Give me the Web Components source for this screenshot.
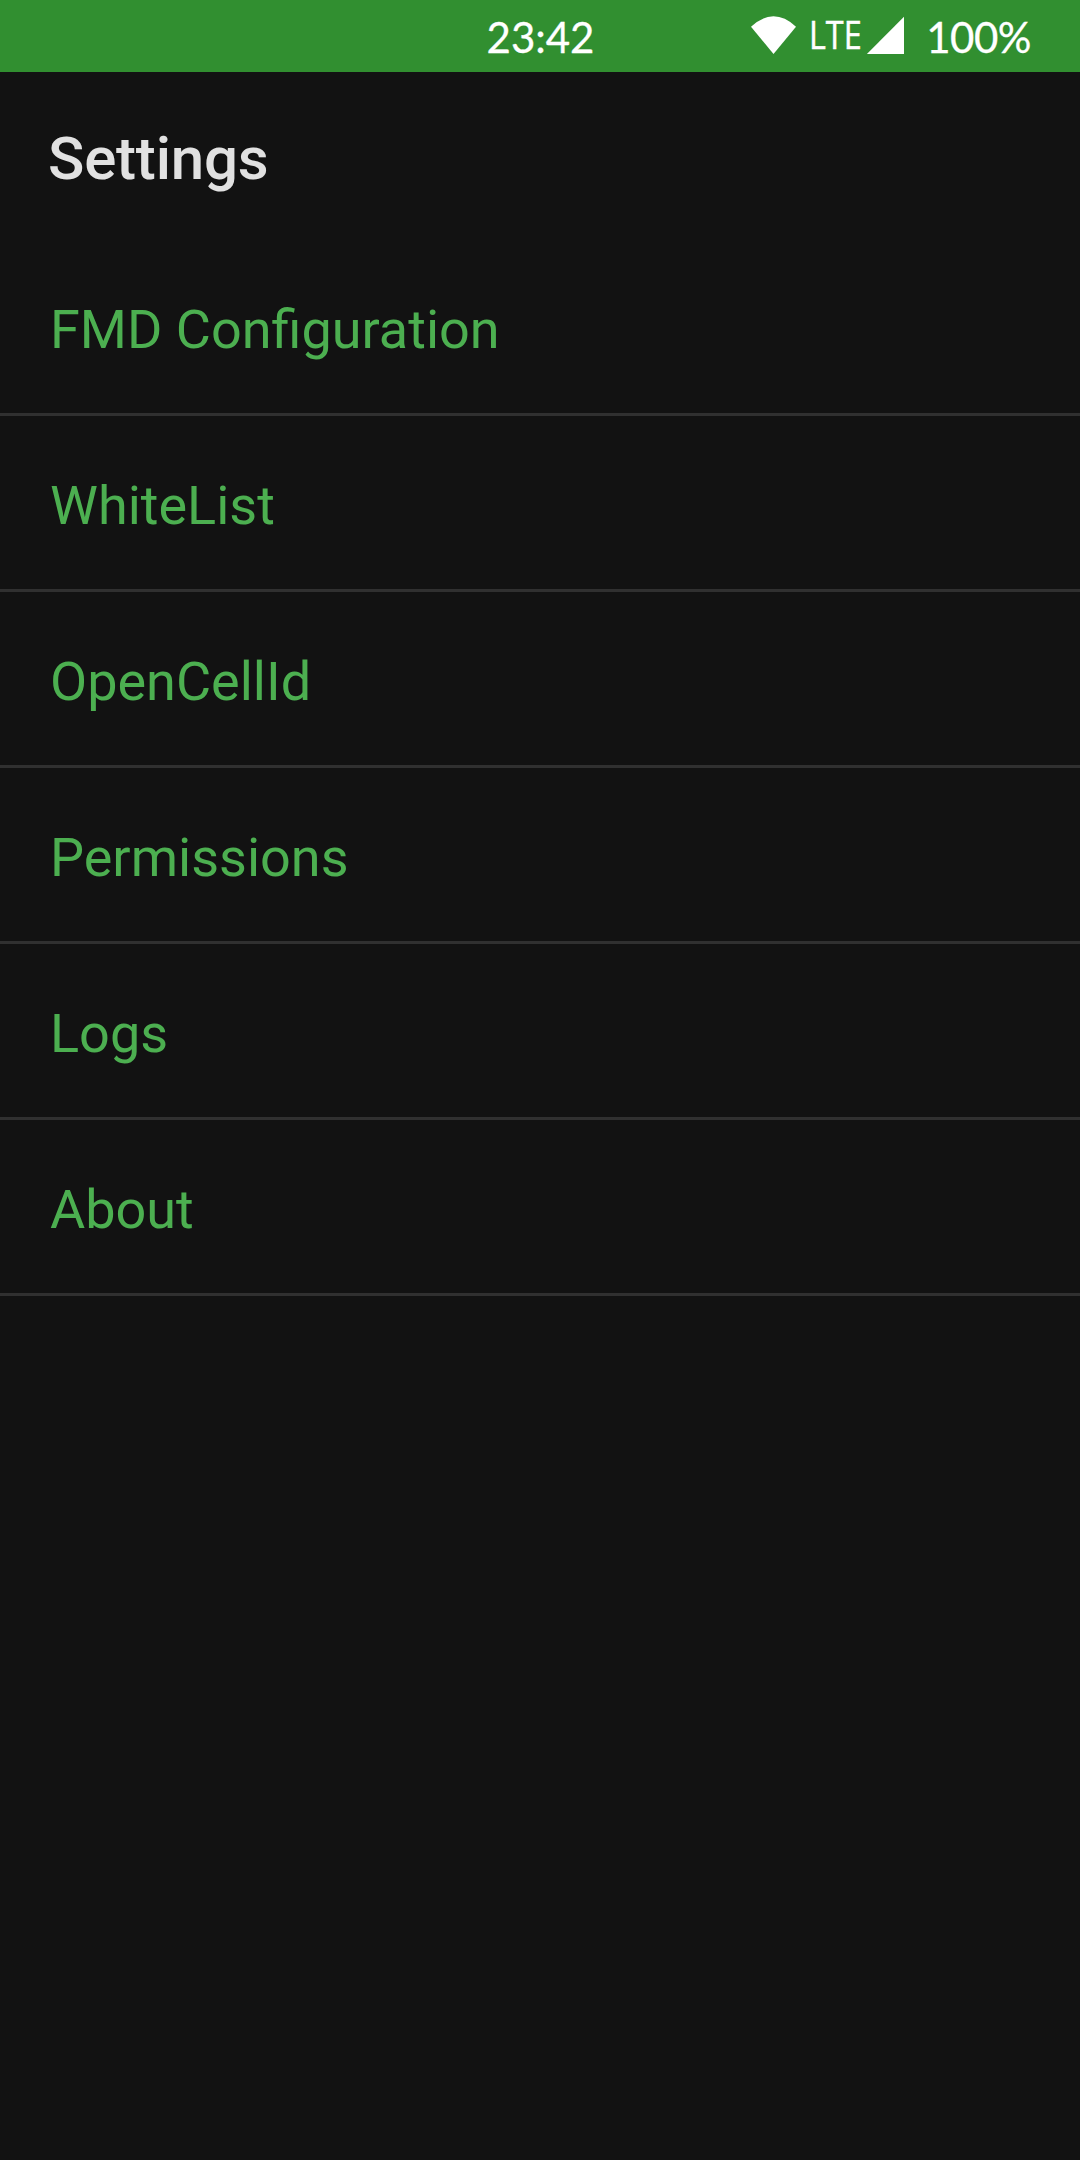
<!DOCTYPE html>
<html lang="en"><head><meta charset="utf-8"><title>Settings</title>
<style>html,body{margin:0;background:#121212}</style></head><body>
<settings-screen></settings-screen>
<script>
const define=(name,html)=>customElements.define(name,class extends HTMLElement{constructor(){super();this.attachShadow({mode:'open'}).innerHTML=html;}});
define('status-bar',`<style>
:host{display:grid;grid-template-columns:1fr auto 1fr;height:72px;background:#318f30;color:#fff;font:42px/70px Lato,sans-serif;box-sizing:border-box;align-items:center;-webkit-text-stroke:.3px #fff}
.clock{grid-column:2;padding:2px 0 0 1px}
.right{display:flex;align-items:center;justify-content:flex-end;padding-right:49.2px}
.lte{font:37.5px/68px "Open Sans",sans-serif;transform-origin:left;margin-left:13.2px;width:50.8px;transform:scaleX(.862);padding-bottom:2px;-webkit-text-stroke:.5px #fff}
svg{margin-bottom:3px}
.wifi{width:45px;height:38px}.cell{width:38px;height:38px;margin-left:6px;margin-right:22px}
.pct{padding-top:2px;letter-spacing:-.55px}
</style><span class="clock">23:42</span><div class="right">
<svg class="wifi" viewBox="0 0 45 38"><path fill="#fff" d="M0 10.700Q22.500-10 45 10.700L22.500 38Z"/></svg><span class="lte">LTE</span>
<svg class="cell" viewBox="0 0 38 38"><path fill="#fff" d="M38 .8V38.200H.7Z"/></svg><span class="pct">100%</span></div>`);
define('app-title',`<style>:host{display:block;height:168px;box-sizing:border-box;padding:3px 48px 0;font:500 60px/168px Roboto,sans-serif;letter-spacing:-.2px;color:#e1e1e1}</style><slot></slot>`);
define('settings-item',`<style>:host{display:block;height:176px;box-sizing:border-box;padding:6px 50px 0;border-bottom:3px solid #303030;font:400 54px/168px Roboto,sans-serif;color:#4caf50}</style><slot></slot>`);
define('settings-screen',`<style>:host{display:flex;flex-direction:column;width:1080px;height:2160px;background:#121212;overflow:hidden}</style>
<status-bar></status-bar><app-title>Settings</app-title>
<settings-item>FMD Configuration</settings-item><settings-item>WhiteList</settings-item><settings-item>OpenCellId</settings-item><settings-item>Permissions</settings-item><settings-item>Logs</settings-item><settings-item>About</settings-item>`);
</script></body></html>
